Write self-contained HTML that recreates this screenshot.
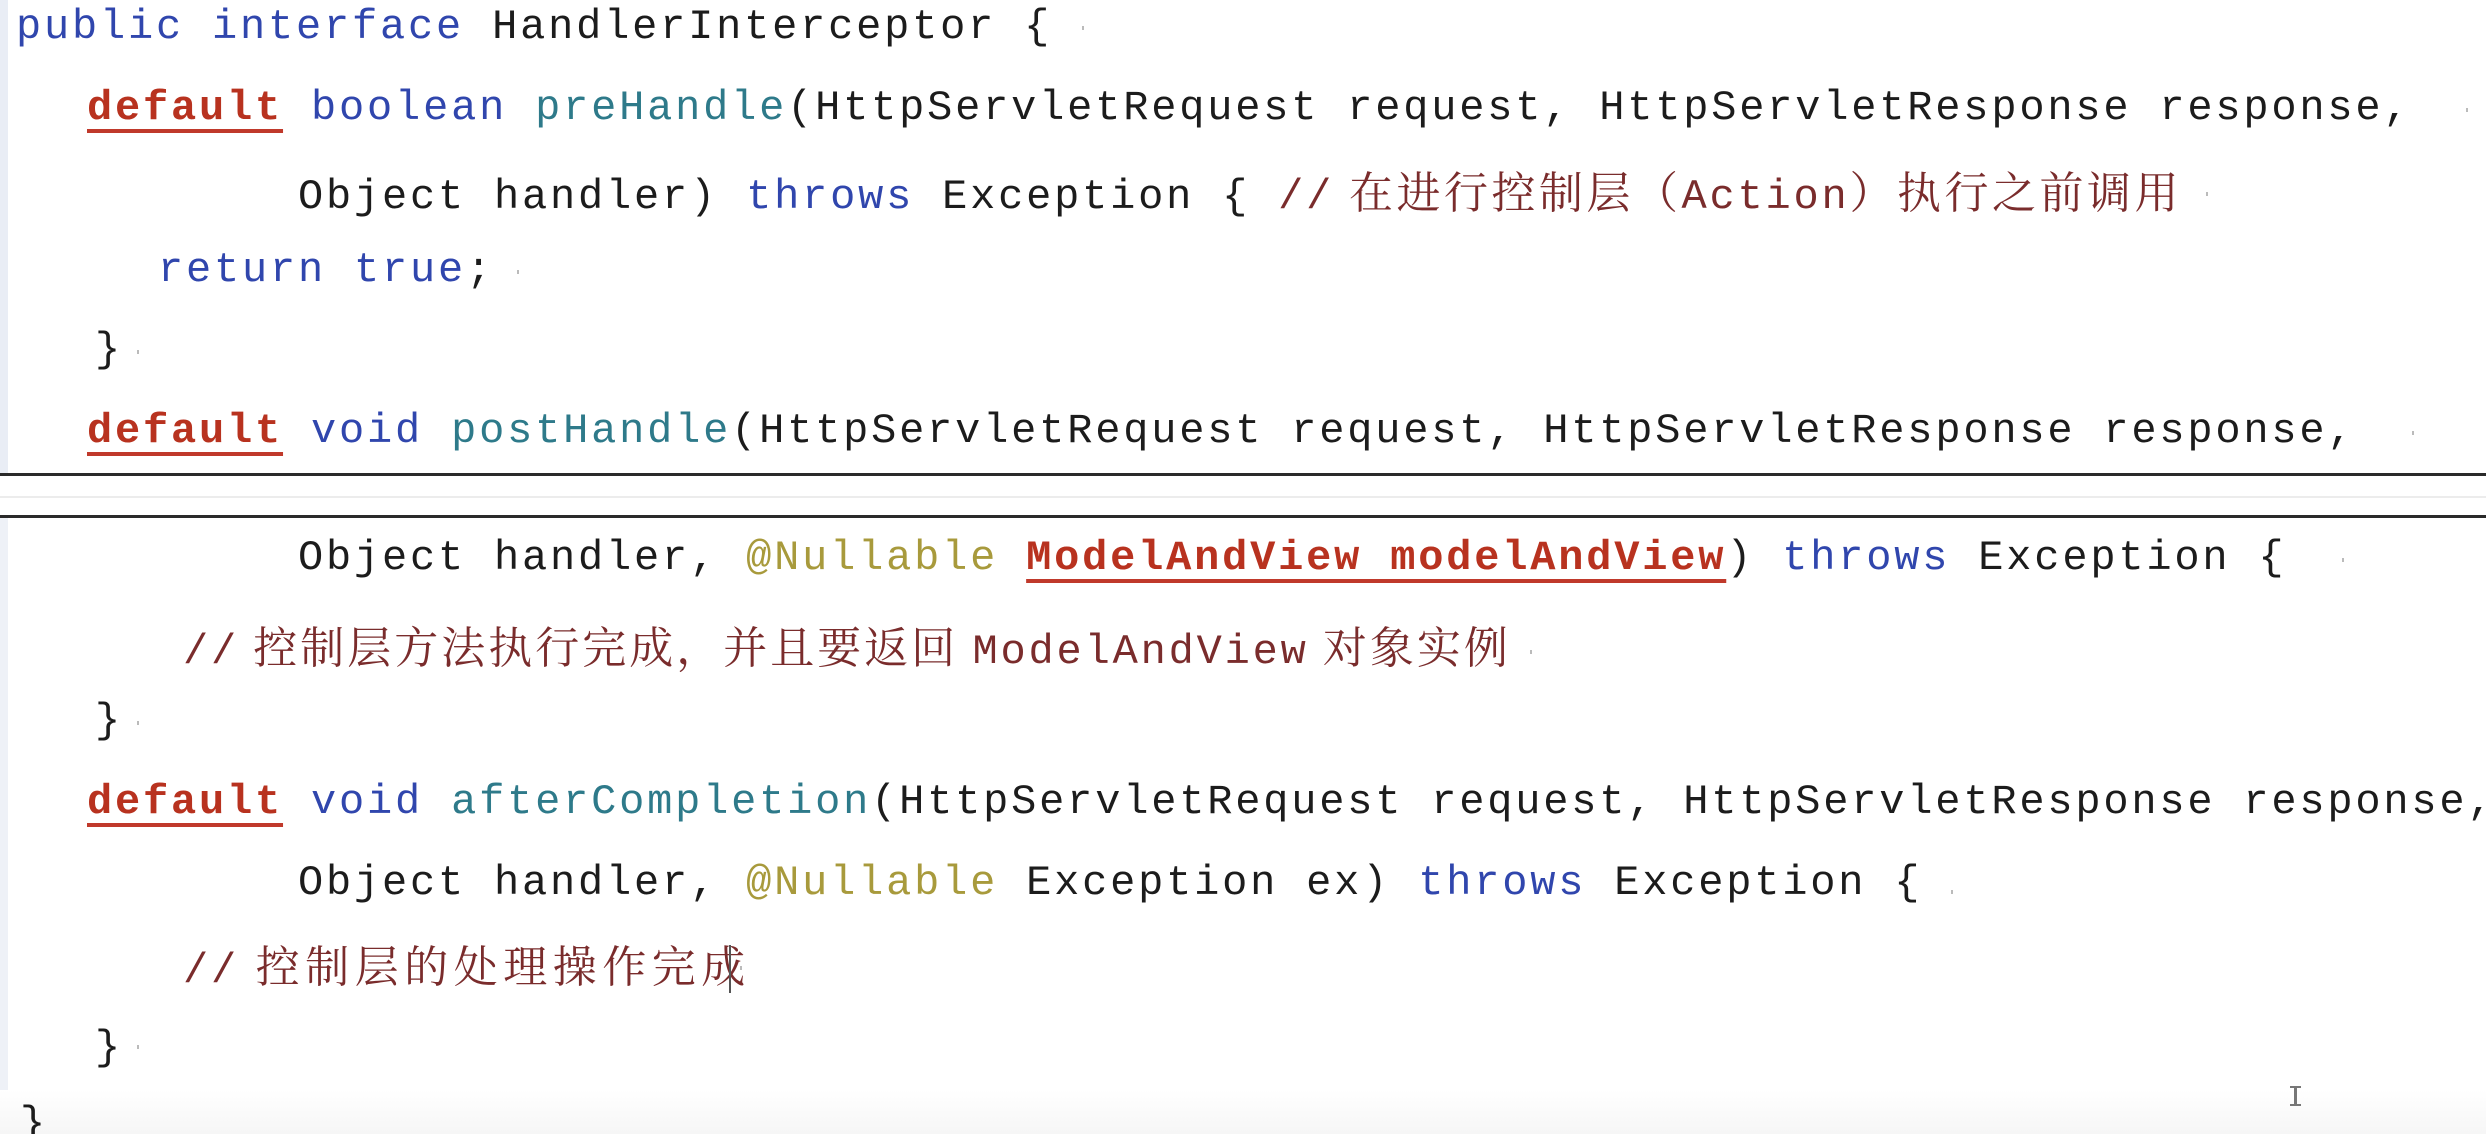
<!DOCTYPE html>
<html style="width:2486px;height:1134px;overflow:hidden"><head><meta charset="utf-8"><style>
html,body{margin:0;padding:0;}
body{width:2486px;height:1134px;overflow:hidden;background:#fff;position:relative;font-family:"Liberation Mono","Noto Serif CJK SC",monospace;}
.l{position:absolute;height:60px;line-height:60px;font-size:42px;letter-spacing:2.8px;white-space:pre;color:#1c1c1c;}
.k{color:#3046ad;}
.m{color:#2e7a8a;}
.d{color:#b8321f;font-weight:bold;text-decoration:underline;text-decoration-color:#c0392b;text-decoration-thickness:4px;text-underline-offset:10px;}
.a{color:#a89a3c;}
.c{color:#7a2c2c;}
.cj{font-family:"Noto Serif CJK SC","Noto Sans CJK SC",serif;font-size:44px;}
.sep{position:absolute;left:0;width:2486px;}
.dot{position:absolute;width:2px;height:4px;background:#bbb;}
</style></head><body>
<div style="position:absolute;left:0;top:0;width:8px;height:473px;background:#e9edf5"></div>
<div style="position:absolute;left:0;top:518px;width:8px;height:616px;background:#eef1f7"></div>
<div style="position:absolute;left:0;top:1090px;width:2486px;height:44px;background:linear-gradient(#fff,#f6f6f6)"></div>

<div class="l" style="left:16px;top:-3px"><span class="k">public interface</span> HandlerInterceptor {</div>
<div class="l" style="left:87px;top:78px"><span class="d">default</span> <span class="k">boolean</span> <span class="m">preHandle</span>(HttpServletRequest request, HttpServletResponse response,</div>
<div class="l" style="left:298px;top:159px">Object handler) <span class="k">throws</span> Exception { <span class="c">//<span class="cj" style="letter-spacing:3.5px"> 在进行控制层（</span>Action<span class="cj" style="letter-spacing:3.5px">）执行之前调用</span></span></div>
<div class="l" style="left:158px;top:240px"><span class="k">return true</span>;</div>
<div class="l" style="left:95px;top:320px">}</div>
<div class="l" style="left:87px;top:401px"><span class="d">default</span> <span class="k">void</span> <span class="m">postHandle</span>(HttpServletRequest request, HttpServletResponse response,</div>

<div class="sep" style="top:473px;height:3px;background:#2a2a2a"></div>
<div class="sep" style="top:496px;height:2px;background:#ececec"></div>
<div class="sep" style="top:515px;height:3px;background:#2a2a2a"></div>

<div class="l" style="left:298px;top:528px">Object handler, <span class="a">@Nullable</span> <span class="d">ModelAndView modelAndView</span>) <span class="k">throws</span> Exception {</div>
<div class="l" style="left:183px;top:614px"><span class="c">//<span class="cj" style="letter-spacing:3px"> 控制层方法执行完成，并且要返回 </span>ModelAndView<span class="cj" style="letter-spacing:3px"> 对象实例</span></span></div>
<div class="l" style="left:95px;top:691px">}</div>
<div class="l" style="left:87px;top:772px"><span class="d">default</span> <span class="k">void</span> <span class="m">afterCompletion</span>(HttpServletRequest request, HttpServletResponse response,</div>
<div class="l" style="left:298px;top:853px">Object handler, <span class="a">@Nullable</span> Exception ex) <span class="k">throws</span> Exception {</div>
<div class="l" style="left:183px;top:933px"><span class="c">//<span class="cj" style="letter-spacing:5.5px"> 控制层的处理操作完成</span></span></div>
<div style="position:absolute;left:729px;top:945px;width:2px;height:48px;background:#555"></div>
<div class="l" style="left:95px;top:1018px">}</div>
<div class="l" style="left:20px;top:1094px">}</div>

<div style="position:absolute;left:2294px;top:1086px;width:3px;height:20px;background:#777"></div>
<div style="position:absolute;left:2290px;top:1086px;width:11px;height:2px;background:#777"></div>
<div style="position:absolute;left:2290px;top:1104px;width:11px;height:2px;background:#777"></div>

<div class="dot" style="left:1082px;top:26px"></div>
<div class="dot" style="left:2466px;top:108px"></div>
<div class="dot" style="left:2206px;top:192px"></div>
<div class="dot" style="left:517px;top:270px"></div>
<div class="dot" style="left:137px;top:350px"></div>
<div class="dot" style="left:2412px;top:431px"></div>
<div class="dot" style="left:2342px;top:558px"></div>
<div class="dot" style="left:1530px;top:650px"></div>
<div class="dot" style="left:137px;top:721px"></div>
<div class="dot" style="left:1951px;top:890px"></div>
<div class="dot" style="left:740px;top:966px"></div>
<div class="dot" style="left:137px;top:1045px"></div>
</body></html>
